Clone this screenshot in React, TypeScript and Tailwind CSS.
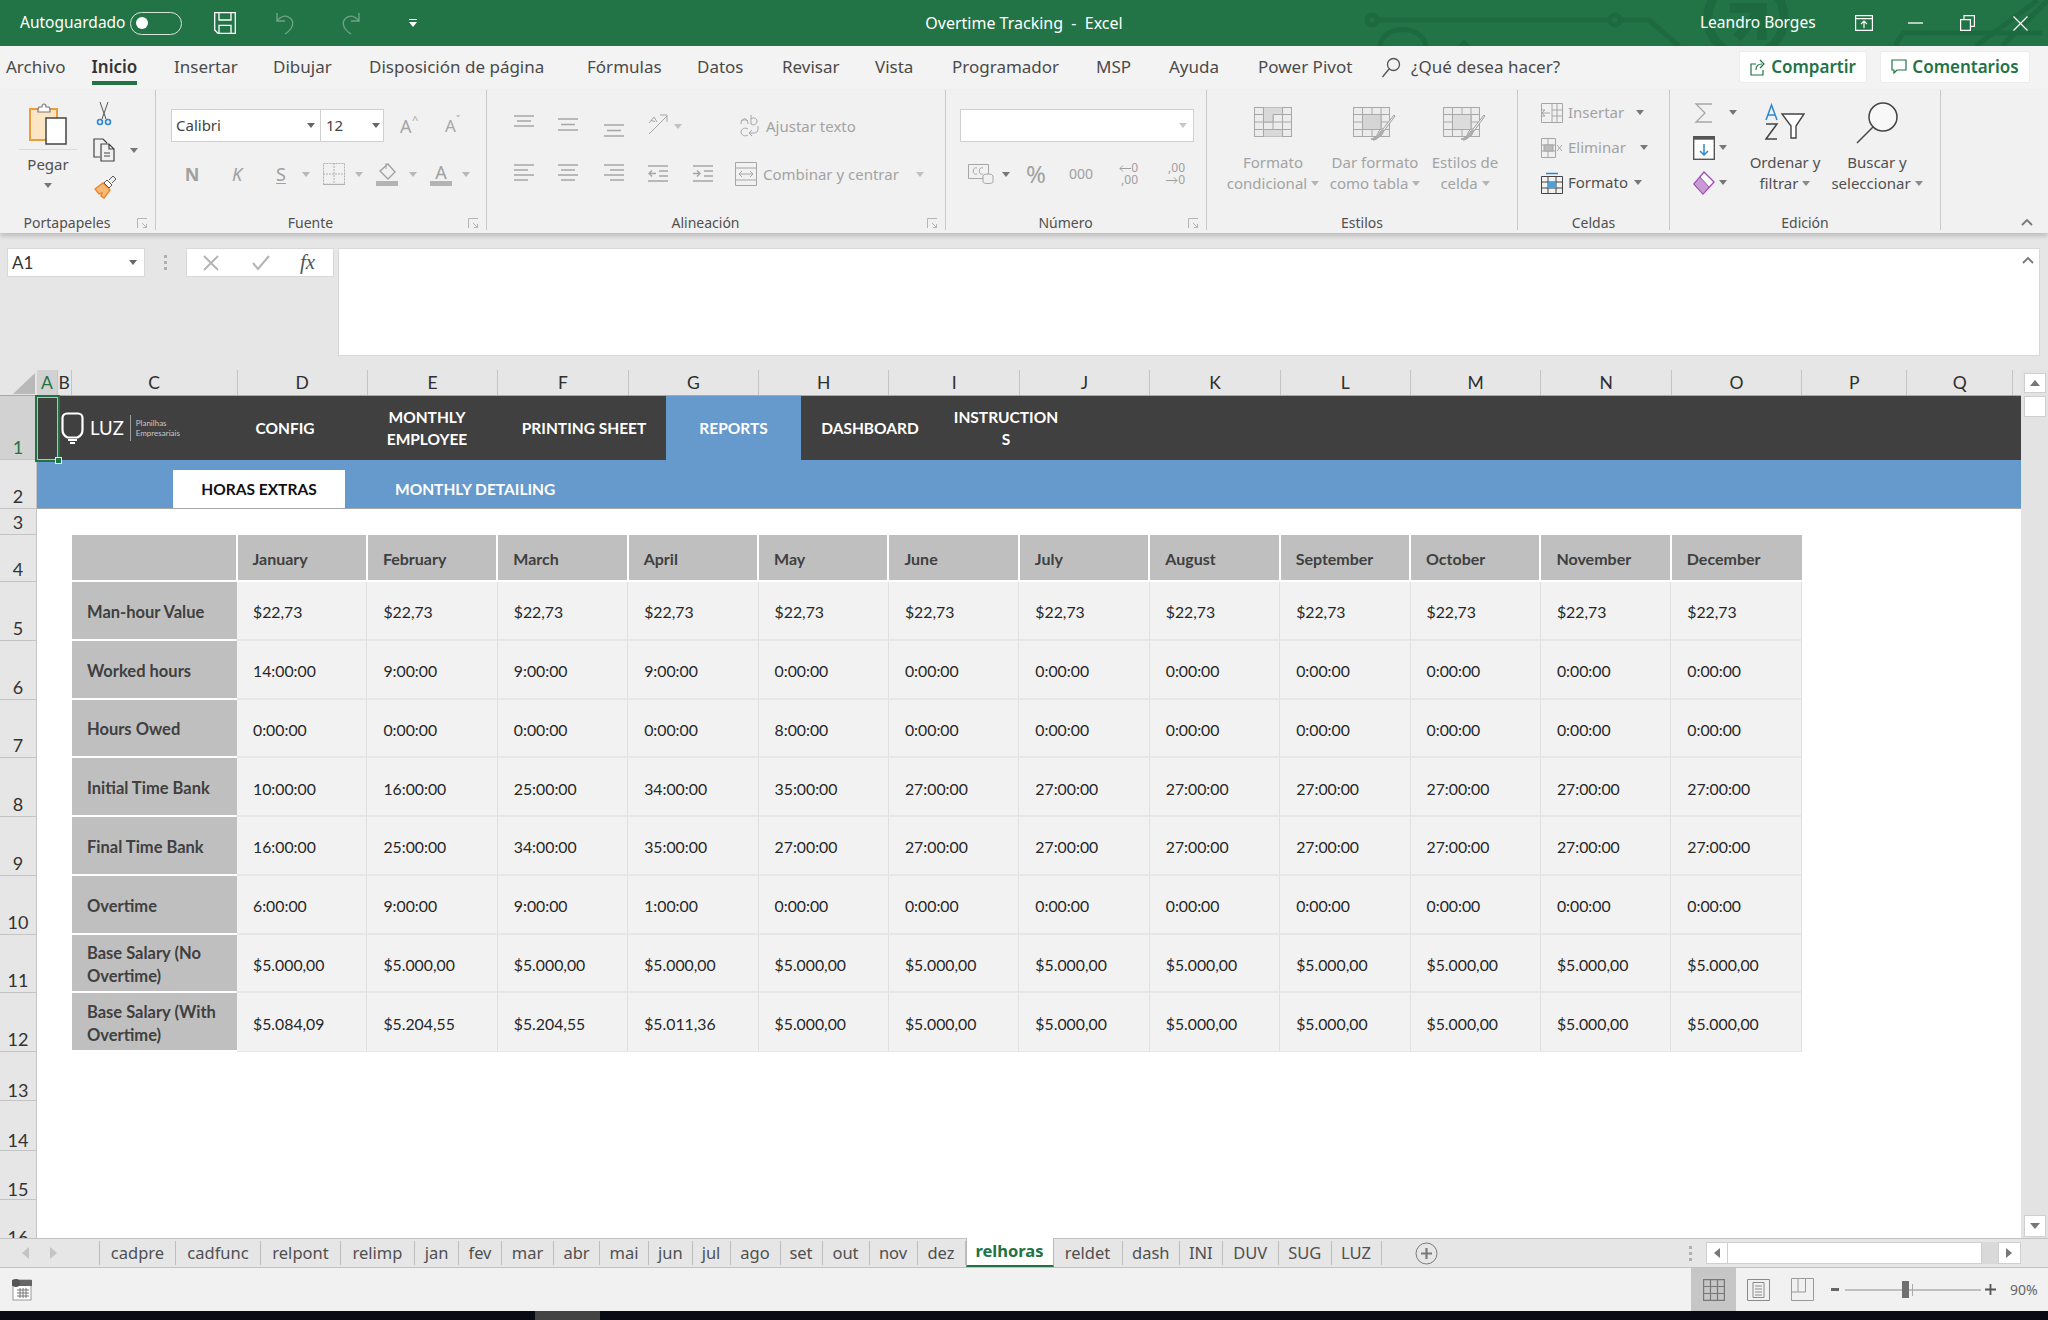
import React from "react";

const UI = "font-['Noto_Sans',sans-serif]";
const CAL = "font-[Lato,sans-serif]";

const Dd = ({ c = "#8a8a8a", className = "" }: { c?: string; className?: string }) => (
  <svg width="8" height="5" viewBox="0 0 8 5" className={`shrink-0 ${className}`}><path d="M0 0h8L4 5z" fill={c} /></svg>
);
const G = "#a6a6a6";

const Launcher = () => (
  <svg width="11" height="11" viewBox="0 0 11 11" className="absolute right-[7px] top-[3px]" fill="none" stroke="#b5b5b5">
    <path d="M.5 10V.5H10M5 5l4.5 4.5M6 9.5h3.5V6" />
  </svg>
);

const Group = ({ w, label, launcher, children }: { w: string; label: string; launcher?: boolean; children: React.ReactNode }) => (
  <div className={`${w} shrink-0 h-[140px] flex flex-col border-r border-[#c8c8c8]`}>
    <div className="h-[125px]">{children}</div>
    <div className={`h-[15px] relative flex items-center justify-center text-[14px] leading-none text-[#505050] ${launcher ? "pr-[21px]" : ""}`}>
      {label}
      {launcher && <Launcher />}
    </div>
  </div>
);

const AlignIcon = ({ kind }: { kind: string }) => {
  const L: Record<string, [number, number][]> = {
    top: [[1, 21], [4, 18], [1, 21]],
    mid: [[1, 21], [4, 18], [1, 21]],
    bot: [[1, 21], [4, 18], [1, 21]],
    left: [[1, 21], [1, 15], [1, 21], [1, 15]],
    center: [[1, 21], [4, 18], [1, 21], [4, 18]],
    right: [[1, 21], [7, 21], [1, 21], [7, 21]],
  };
  const startY = kind === "top" ? 1 : kind === "mid" ? 4 : kind === "bot" ? 10 : 2;
  const step = kind === "top" ? 5 : kind === "mid" || kind === "bot" ? 5.5 : 5;
  return (
    <svg width="22" height="22" viewBox="0 0 22 22" className="shrink-0" stroke={G} strokeWidth="1.5" fill="none">
      {L[kind].map((p, i) => <path key={i} d={`M${p[0]} ${startY + i * step}H${p[1]}`} />)}
    </svg>
  );
};

const Indent = ({ dir }: { dir: "l" | "r" }) => (
  <svg width="22" height="22" viewBox="0 0 22 22" className="shrink-0" stroke={G} strokeWidth="1.4" fill="none">
    <path d="M1 3h20M12 8h9M12 13h9M1 18h20" />
    {dir === "l" ? <path d="M9 10.5H2m3-3-3 3 3 3" /> : <path d="M1 10.5h7m-3-3 3 3-3 3" />}
  </svg>
);

const CellIcon = ({ fill = "#d9d9d9" }: { fill?: string }) => (
  <svg width="38" height="30" viewBox="0 0 38 30" fill="none" stroke="#a8a8a8">
    <rect x=".5" y=".5" width="37" height="29" fill="#ececec" />
    <path d="M9.5 0v30M19 0v30M28.5 0v30M0 7.5h38M0 15h38M0 22.5h38" />
    <path d="M9.5 0h19v7.5H19V15H9.5zM9.5 22.5h19V30h-19z" fill={fill} />
    <path d="M19 7.5h19" />
  </svg>
);

const TableBrush = ({ fill = "#d5d5d5" }: { fill?: string }) => (
  <svg width="44" height="36" viewBox="0 0 44 36" fill="none" stroke="#a8a8a8">
    <rect x=".5" y=".5" width="36" height="29" fill="#ececec" />
    <path d="M9.5 0v30M19 0v30M28 0v30M0 7.5h37M0 15h37M0 22.5h37" />
    <rect x="9.5" y="7.5" width="18.5" height="15" fill={fill} />
    <path d="M42 9 31 24c-3 1-4 3-5 5-1 3-4 4-6 4 3-1 4-5 5-7 1-3 3-4 5-4L41 8z" fill="#f1f1f1" stroke="#a0a0a0" />
    <path d="M26 27c1-3 3-4 5-4-1 3-2 6-5 7-3 2-6 3-8 2 3-1 6-2 8-5z" fill="#b0b0b0" />
  </svg>
);

const LargeBtn = ({ w, icon, l1, l2, pt, off }: { w: string; icon: React.ReactNode; l1: string; l2: string; pt?: string; off?: boolean }) => (
  <div className={`${w} shrink-0 flex flex-col items-center ${off ? "text-[#a3a3a3]" : "text-[#505050]"} text-[15px] leading-[21px]`}>
    <div className={`h-[62px] ${pt ?? "pt-[17px]"}`}>{icon}</div>
    <div>{l1}</div>
    <div className="flex items-center gap-[4px] whitespace-nowrap">{l2}<Dd c={off ? "#b5b5b5" : "#8a8a8a"} /></div>
  </div>
);

const tabs: [string, string, string?][] = [
  ["Archivo", "w-[85.5px]"],
  ["Inicio", "w-[82.5px]", "sel"],
  ["Insertar", "w-[99px]"],
  ["Dibujar", "w-[96px]"],
  ["Disposición de página", "w-[218px]"],
  ["Fórmulas", "w-[110px]"],
  ["Datos", "w-[85px]"],
  ["Revisar", "w-[93px]"],
  ["Vista", "w-[77px]"],
  ["Programador", "w-[144px]"],
  ["MSP", "w-[73px]"],
  ["Ayuda", "w-[89px]"],
  ["Power Pivot", "w-[122px]"],
];

const TitleBar = () => (
  <div className={`h-[46px] bg-[#227447] relative flex items-center text-white shrink-0 overflow-hidden ${UI}`}>
    <svg className="absolute inset-0" width="2048" height="46" viewBox="0 0 2048 46" fill="none" stroke="#1e6a40" strokeWidth="5">
      <path d="M1377 20h233M1620 20h29l30 26" />
      <circle cx="1372" cy="20" r="5" />
      <circle cx="1615" cy="20" r="5" />
      <path d="M1380 46c3-22 42-22 46 0" />
      <path d="M1458 46l6-7 6 7z" fill="#1e6a40" stroke="none" />
      <circle cx="1746" cy="18" r="38" strokeWidth="9" />
      <path d="M1730 8h32v32M1762 8l-25 30" strokeWidth="10" />
      <path d="M1895 46l8-13h140M2038 0l-62 46M2048 0l-46 46" />
    </svg>
    <div className="relative w-[700px] shrink-0 flex items-center pl-[20px]">
      <span className="w-[110px] text-[15.5px] leading-none whitespace-nowrap">Autoguardado</span>
      <div className="w-[52px] h-[23px] rounded-full border border-[#d7e6dd] flex items-center pl-[5px]">
        <div className="w-[12px] h-[12px] rounded-full bg-white" />
      </div>
      <svg width="22" height="22" viewBox="0 0 22 22" fill="none" stroke="#fff" strokeWidth="1.3" className="ml-[32px]">
        <path d="M.7.7h20.6v20.6H4l-3.3-3.3zM5 .7v7.3h12V.7M5 21.3v-8h12v8" />
      </svg>
      <svg width="22" height="24" viewBox="0 0 22 24" fill="none" stroke="#6fa386" strokeWidth="1.4" className="ml-[39px]">
        <path d="M2 2v8h8M2 10c4-5 9-6 13-3 5 4 3 11-5 16" />
      </svg>
      <svg width="22" height="24" viewBox="0 0 22 24" fill="none" stroke="#6fa386" strokeWidth="1.4" className="ml-[42px]">
        <path d="M20 2v8h-8M20 10c-4-5-9-6-13-3-5 4-3 11 5 16" />
      </svg>
      <svg width="8" height="9" viewBox="0 0 8 9" className="ml-[48px]"><path d="M0 0h8v1H0zM0 3h8L4 8z" fill="#fff" /></svg>
    </div>
    <div className="relative w-[648px] shrink-0 text-center text-[16px] leading-none whitespace-pre">Overtime Tracking  -  Excel</div>
    <div className="relative flex items-center pl-[352px]">
      <span className="w-[113px] text-[15.5px] leading-none whitespace-nowrap">Leandro Borges</span>
      <svg width="18" height="18" viewBox="0 0 18 18" fill="none" stroke="#fff" strokeWidth="1.2" className="ml-[42px]">
        <path d="M.6 1.6h16.8v14.8H.6zM.6 4.6h16.8M9 14V7M6 10l3-3 3 3" />
      </svg>
      <svg width="16" height="2" viewBox="0 0 16 2" className="ml-[35px]"><path d="M0 1h15" stroke="#fff" strokeWidth="1.3" /></svg>
      <svg width="15" height="16" viewBox="0 0 15 16" fill="none" stroke="#fff" strokeWidth="1.2" className="ml-[36px]">
        <path d="M.6 4.6h9.8v10.8H.6zM4 4.6V.6h10.4v10.8h-4" />
      </svg>
      <svg width="15" height="15" viewBox="0 0 15 15" fill="none" stroke="#fff" strokeWidth="1.2" className="ml-[38px]"><path d="M.5.5l14 14M14.500.5l-14 14" /></svg>
    </div>
  </div>
);

const TabsRow = () => (
  <div className={`h-[44px] bg-[#f3f3f3] flex items-start shrink-0 pl-[6px] ${UI} text-[#4a4a4a] text-[17px]`}>
    {tabs.map(([t, w, s]) => (
      <div key={t} className={`${w} shrink-0 h-[44px] pt-[8px] leading-[26px] whitespace-nowrap`}>
        {s ? (
          <span className="relative inline-block font-semibold text-[#333]">
            {t}
            <span className="absolute left-0 right-0 top-[27px] h-[4px] bg-[#227447]" />
          </span>
        ) : t}
      </div>
    ))}
    <svg width="20" height="22" viewBox="0 0 20 22" fill="none" stroke="#555" strokeWidth="1.3" className="ml-[1px] mt-[11px] shrink-0">
      <circle cx="12.5" cy="7.5" r="6" /><path d="M8 12 1.5 20" />
    </svg>
    <div className="ml-[10px] w-[328px] shrink-0 pt-[8px] leading-[26px] whitespace-nowrap">¿Qué desea hacer?</div>
    <div className="mt-[5px] w-[128px] h-[32px] shrink-0 bg-white rounded-[2px] border border-[#ececec] flex items-center justify-center gap-[5px] text-[#217346] font-semibold">
      <svg width="16" height="17" viewBox="0 0 16 17" fill="none" stroke="#217346" strokeWidth="1.2"><path d="M6 5H1v11h12v-5M6 11c0-4 2-6 6-6M10 1l4 4-4 4" /></svg>
      Compartir
    </div>
    <div className="ml-[13px] mt-[5px] w-[150px] h-[32px] shrink-0 bg-white rounded-[2px] border border-[#ececec] flex items-center justify-center gap-[5px] text-[#217346] font-semibold">
      <svg width="16" height="16" viewBox="0 0 16 16" fill="none" stroke="#217346" strokeWidth="1.2"><path d="M1 1h14v10H6l-3 3v-3H1z" /></svg>
      Comentarios
    </div>
  </div>
);

const DecUp = () => (
  <div className="ml-[18px] w-[26px] flex flex-col items-end text-[12px] leading-[12px]">
    <div className="flex items-center">
      <svg width="12" height="9" viewBox="0 0 12 9" fill="none" stroke="#a0a0a0"><path d="M12 4.500H1m3-3-3 3 3 3" /></svg>
      <span>0</span>
    </div>
    <span>,00</span>
  </div>
);
const DecDown = () => (
  <div className="ml-[21px] w-[26px] flex flex-col items-end text-[12px] leading-[12px]">
    <span>,00</span>
    <div className="flex items-center">
      <svg width="12" height="9" viewBox="0 0 12 9" fill="none" stroke="#a0a0a0"><path d="M0 4.500h11m-3-3 3 3-3 3" /></svg>
      <span>0</span>
    </div>
  </div>
);

const Ribbon = () => (
  <div className={`h-[143px] bg-[#f1f1f1] shrink-0 flex relative z-10 shadow-[0_3px_5px_rgba(0,0,0,0.18)] ${UI}`}>
    {/* Portapapeles */}
    <Group w="w-[156px]" label="Portapapeles" launcher>
      <div className="flex">
        <div className="w-[96px] shrink-0 flex flex-col items-center pt-[13px]">
          <svg width="38" height="42" viewBox="0 0 38 42" fill="none">
            <path d="M1 6h27v31H1z" fill="#fbe5c4" stroke="#ec9c3a" strokeWidth="2" />
            <path d="M9 6l1-2h3c0-4 4-4 4 0h3l1 2v3H9z" fill="#fff" stroke="#777" strokeWidth="1.2" />
            <path d="M17 15h20v26H17z" fill="#fff" stroke="#444" strokeWidth="1.5" />
          </svg>
          <div className="w-[58px] h-px bg-[#d9d9d9] mt-[4px]" />
          <div className="text-[15px] leading-[20px] text-[#505050] mt-[4px]">Pegar</div>
          <Dd className="mt-[9px]" c="#777" />
        </div>
        <div className="flex flex-col pt-[12px]">
          <svg width="16" height="24" viewBox="0 0 16 24" fill="none" stroke="#555">
            <path d="M4 0l6 17M12 0 6 17" /><circle cx="4" cy="20" r="2.500" stroke="#2e86d0" strokeWidth="1.6" /><circle cx="12" cy="20" r="2.500" stroke="#2e86d0" strokeWidth="1.6" />
          </svg>
          <div className="flex items-center mt-[12px]">
            <svg width="23" height="24" viewBox="0 0 23 24" fill="none" stroke="#444" strokeWidth="1.2" className="-ml-[3px]">
              <path d="M7 19H1V1h9l4 4M8 6h8l5 5v12H8zM16 6v5h5M11 15h6M11 18h6" />
            </svg>
            <Dd className="ml-[14px]" c="#777" />
          </div>
          <svg width="24" height="24" viewBox="0 0 24 24" fill="none" className="mt-[13px] -ml-[3px]">
            <path d="M2 14l8-6 7 7-6 8-3-2 1-3-3 1z" fill="#f7b977" stroke="#e9862a" strokeWidth="1.4" />
            <path d="M11 8l3-3 5 5-3 3z" fill="#fff" stroke="#555" />
            <path d="M16 5l4-4 3 3-4 4" stroke="#555" />
          </svg>
        </div>
      </div>
    </Group>

    {/* Fuente */}
    <Group w="w-[331px]" label="Fuente" launcher>
      <div className="pt-[19px] pl-[15px] flex items-center">
        <div className="w-[150px] h-[33px] bg-white border border-[#d0d0d0] flex items-center justify-between pl-[4px] pr-[5px] text-[15px] text-[#444]">Calibri<Dd c="#666" /></div>
        <div className="w-[63px] h-[33px] bg-white border border-l-0 border-[#d0d0d0] flex items-center justify-between pl-[5px] pr-[3px] text-[15px] text-[#444]">12<Dd c="#666" /></div>
        <div className="ml-[16px] w-[22px] text-[18px] leading-none text-[#a6a6a6] relative">A<span className="absolute -top-[3px] left-[12px] text-[11px]">^</span></div>
        <div className="ml-[23px] w-[22px] text-[17px] leading-none text-[#a6a6a6] relative">A<span className="absolute -top-[2px] left-[11px] text-[10px]">ˇ</span></div>
      </div>
      <div className="mt-[20px] pl-[25px] flex items-center h-[24px] text-[#a0a0a0]">
        <span className="w-[22px] text-center text-[18px] font-bold">N</span>
        <span className="ml-[23px] w-[22px] text-center text-[18px] italic">K</span>
        <span className="ml-[22px] w-[22px] text-center text-[18px] underline underline-offset-2">S</span>
        <Dd c="#b8b8b8" className="ml-[10px]" />
        <svg width="22" height="22" viewBox="0 0 22 22" fill="none" stroke="#b0b0b0" strokeDasharray="2 1" className="ml-[13px]"><path d="M.5.5h21v21H.5zM11 0v22M0 11h22" /><path d="M0 21.500h22" strokeDasharray="" strokeWidth="1.5" /></svg>
        <Dd c="#b8b8b8" className="ml-[10px]" />
        <svg width="22" height="24" viewBox="0 0 22 24" fill="none" className="ml-[13px]"><path d="M4 9l8-7 7 8-7 7z" stroke="#a0a0a0" strokeWidth="1.3" /><path d="M10 1v6" stroke="#a0a0a0" /><rect y="19" width="22" height="5" fill="#b3b3b3" /></svg>
        <Dd c="#b8b8b8" className="ml-[11px]" />
        <div className="ml-[13px] w-[22px] flex flex-col items-center text-[18px] leading-[18px]">A<div className="w-[22px] h-[5px] bg-[#b3b3b3]" /></div>
        <Dd c="#b8b8b8" className="ml-[10px]" />
      </div>
    </Group>

    {/* Alineación */}
    <Group w="w-[459px]" label="Alineación" launcher>
      <div className="pl-[26px] mt-[24px] flex items-center h-[24px]">
        <AlignIcon kind="top" />
        <div className="ml-[22px]"><AlignIcon kind="mid" /></div>
        <div className="ml-[24px]"><AlignIcon kind="bot" /></div>
        <svg width="22" height="24" viewBox="0 0 22 24" fill="none" stroke={G} className="ml-[22px] shrink-0 -mt-[4px]"><path d="M2 22 20 4M13 3h7v7" /><path d="M2 11l5-6 3 5M4 8.500l4 1" /></svg>
        <Dd c="#c0c0c0" className="ml-[5px]" />
        <svg width="20" height="24" viewBox="0 0 20 24" fill="none" stroke={G} className="ml-[58px] shrink-0"><path d="M1 10c0-7 7-7 7 0M1 7c3-2 6-1 7 0M11 1v9c3 2 6 0 6-3s-4-4-6-2M8 15c-3-2-7 0-7 3s4 5 7 3M18 12v3c0 3-2 4-4 4H9m3-3-3 3 3 3" /></svg>
        <span className="ml-[6px] text-[15px] leading-none text-[#a3a3a3] whitespace-nowrap">Ajustar texto</span>
      </div>
      <div className="pl-[26px] mt-[24px] flex items-center h-[24px]">
        <AlignIcon kind="left" />
        <div className="ml-[22px]"><AlignIcon kind="center" /></div>
        <div className="ml-[24px]"><AlignIcon kind="right" /></div>
        <div className="ml-[22px]"><Indent dir="l" /></div>
        <div className="ml-[23px]"><Indent dir="r" /></div>
        <svg width="22" height="24" viewBox="0 0 22 24" fill="none" stroke={G} className="ml-[21px] shrink-0"><path d="M.5.5h21v23H.5zM0 6h22M0 18h22M4 12h14M7 9l-3 3 3 3M15 9l3 3-3 3" /></svg>
        <span className="ml-[6px] w-[153px] shrink-0 text-[15px] leading-none text-[#a3a3a3] whitespace-nowrap">Combinar y centrar</span>
        <Dd c="#c0c0c0" />
      </div>
    </Group>

    {/* Número */}
    <Group w="w-[261px]" label="Número" launcher>
      <div className="pt-[19px] pl-[14px]">
        <div className="w-[234px] h-[33px] bg-white border border-[#d0d0d0] flex items-center justify-end pr-[6px]"><Dd c="#c8c8c8" /></div>
      </div>
      <div className="mt-[20px] pl-[22px] flex items-center h-[24px] text-[#a0a0a0]">
        <svg width="26" height="20" viewBox="0 0 26 20" fill="none" stroke={G}><path d="M.5.5h20v14H.5z" /><path d="M9 4c-5-2-5 8 0 6M15 4c-5-2-5 8 0 6" /><ellipse cx="20" cy="12" rx="5" ry="2" fill="#f1f1f1" /><path d="M15 12v6c0 2 10 2 10 0v-6" fill="#f1f1f1" /></svg>
        <Dd c="#777" className="ml-[8px]" />
        <span className="ml-[14px] w-[24px] text-center text-[24px] leading-none">%</span>
        <span className="ml-[20px] w-[26px] text-center text-[14px] leading-none">000</span>
        <DecUp />
        <DecDown />
      </div>
    </Group>

    {/* Estilos */}
    <Group w="w-[311px]" label="Estilos">
      <div className="flex pl-[15px]">
        <LargeBtn w="w-[102px]" off icon={<CellIcon />} l1="Formato" l2="condicional" />
        <LargeBtn w="w-[102px]" off icon={<TableBrush />} l1="Dar formato" l2="como tabla" />
        <LargeBtn w="w-[78px]" off icon={<TableBrush fill="#dcdcdc" />} l1="Estilos de" l2="celda" />
      </div>
    </Group>

    {/* Celdas */}
    <Group w="w-[152px]" label="Celdas">
      <div className="pt-[5px] pl-[23px] text-[15px]">
        <div className="h-[35px] flex items-center text-[#a3a3a3]">
          <svg width="22" height="20" viewBox="0 0 22 20" fill="none" stroke={G}><path d="M.5.500h21v19H.5zM11 0v20M16 0v20M11 7h11M11 13h11M0 13h4M0 7h4" /><path d="M9 10H1m3-3-3 3 3 3" /></svg>
          <span className="ml-[5px] w-[68px]">Insertar</span><Dd c="#777" />
        </div>
        <div className="h-[35px] flex items-center text-[#a3a3a3]">
          <svg width="22" height="20" viewBox="0 0 22 20" fill="none" stroke={G}><path d="M.5.500h14v19H.5zM0 7h15M0 13h15M7 0v20" /><rect x="3" y="7" width="9" height="6" fill="#bbb" /><path d="M16 7l5 6M21 7l-5 6" /></svg>
          <span className="ml-[5px] w-[72px]">Eliminar</span><Dd c="#777" />
        </div>
        <div className="h-[35px] flex items-center text-[#505050]">
          <svg width="22" height="22" viewBox="0 0 22 22" fill="none" stroke="#444"><path d="M.5 4.500h21v17H.5zM0 10h22M0 16h22M7 4v18M15 4v18" /><rect x="7" y="10" width="8" height="6" fill="#4d9fd8" stroke="none" /><path d="M5 1.500h12" stroke="#2e86d0" strokeWidth="1.5" /></svg>
          <span className="ml-[5px] w-[66px]">Formato</span><Dd c="#777" />
        </div>
      </div>
    </Group>

    {/* Edición */}
    <Group w="w-[271px]" label="Edición">
      <div className="flex">
        <div className="w-[74px] shrink-0 pt-[5px] pl-[23px]">
          <div className="h-[35px] flex items-center">
            <svg width="22" height="22" viewBox="0 0 22 22" fill="none" stroke={G} strokeWidth="1.3" className="shrink-0"><path d="M19 2H3l9 9-9 9h16" /></svg>
            <Dd c="#777" className="ml-[14px]" />
          </div>
          <div className="h-[35px] flex items-center">
            <svg width="22" height="24" viewBox="0 0 22 24" fill="none" className="shrink-0"><rect x=".7" y=".7" width="20.6" height="22.6" fill="#fff" stroke="#555" strokeWidth="1.4" /><rect x=".7" y=".7" width="20.6" height="3" fill="#555" /><path d="M11 8v11M7 15l4 4 4-4" stroke="#2e86d0" strokeWidth="1.5" /></svg>
            <Dd c="#777" className="ml-[4px]" />
          </div>
          <div className="h-[35px] flex items-center">
            <svg width="22" height="24" viewBox="0 0 22 24" className="shrink-0"><path d="M11 1l10 10-11 12L1 13z" fill="#fff" stroke="#a24fb5" strokeWidth="1.4" /><path d="M1 13l6-7 9 10-6 7z" fill="#c89ad4" stroke="#a24fb5" /></svg>
            <Dd c="#777" className="ml-[4px]" />
          </div>
        </div>
        <LargeBtn w="w-[82px]" pt="pt-[13px]" icon={
          <svg width="40" height="38" viewBox="0 0 40 38" fill="none" strokeWidth="1.5">
            <path d="M1 17 6.500 2 12 17M3 12h7" stroke="#2e86d0" />
            <path d="M1 21h11L1 36h11" stroke="#444" />
            <path d="M17 11h22l-8 12v12h-5V23z" fill="#fff" stroke="#444" strokeWidth="1.4" />
          </svg>
        } l1="Ordenar y" l2="filtrar" />
        <LargeBtn w="w-[102px]" pt="pt-[12px]" icon={
          <svg width="42" height="42" viewBox="0 0 42 42" fill="none" stroke="#444" strokeWidth="1.5">
            <circle cx="27" cy="15" r="14" fill="#f8f8f8" />
            <path d="M17 25 1 41" />
          </svg>
        } l1="Buscar y" l2="seleccionar" />
      </div>
    </Group>

    <div className="flex-1 flex items-end justify-end pr-[15px] pb-[7px]">
      <svg width="12" height="8" viewBox="0 0 12 8" fill="none" stroke="#777" strokeWidth="1.8"><path d="M1 7l5-5 5 5" /></svg>
    </div>
  </div>
);

const FormulaArea = () => (
  <div className={`h-[137px] bg-[#e6e6e6] shrink-0 flex items-start pt-[15px] pl-[7px] ${CAL}`}>
    <div className="w-[138px] h-[29px] bg-white border border-[#d8d8d8] flex items-center justify-between pl-[4px] pr-[7px] text-[17px] text-[#333]">A1<Dd c="#666" /></div>
    <div className="w-[41px] h-[29px] flex flex-col items-center justify-center gap-[3px]">
      <i className="block w-[3px] h-[3px] bg-[#b0b0b0]" /><i className="block w-[3px] h-[3px] bg-[#b0b0b0]" /><i className="block w-[3px] h-[3px] bg-[#b0b0b0]" />
    </div>
    <div className="w-[148px] h-[29px] bg-white border border-[#d8d8d8] flex items-center pl-[16px]">
      <svg width="16" height="16" viewBox="0 0 16 16" fill="none" stroke="#b3b3b3" strokeWidth="1.8"><path d="M1 1l14 14M15 1 1 15" /></svg>
      <svg width="18" height="16" viewBox="0 0 18 16" fill="none" stroke="#b3b3b3" strokeWidth="2" className="ml-[33px]"><path d="M1 8l5 6L17 1" /></svg>
      <span className="ml-[30px] font-['Liberation_Serif',serif] italic text-[21px] leading-none text-[#555]">fx</span>
    </div>
    <div className="ml-[4px] w-[1702px] h-[108px] bg-white border border-[#d8d8d8] flex justify-end pt-[7px] pr-[5px]">
      <svg width="12" height="8" viewBox="0 0 12 8" fill="none" stroke="#777" strokeWidth="1.8"><path d="M1 7l5-5 5 5" /></svg>
    </div>
  </div>
);

const cols: [string, string, boolean?][] = [
  ["A", "w-[21px]", true], ["B", "w-[13.5px]"], ["C", "w-[166px]"],
  ["D", "w-[130.4px]"], ["E", "w-[130.4px]"], ["F", "w-[130.4px]"], ["G", "w-[130.4px]"], ["H", "w-[130.4px]"], ["I", "w-[130.4px]"],
  ["J", "w-[130.4px]"], ["K", "w-[130.4px]"], ["L", "w-[130.4px]"], ["M", "w-[130.4px]"], ["N", "w-[130.4px]"], ["O", "w-[130.4px]"],
  ["P", "w-[105px]"], ["Q", "w-[106px]"],
];

const RowH = ({ n, sel, h, center, pb }: { n: number; sel?: boolean; h: string; center?: boolean; pb?: string }) => (
  <div className={`${h} w-[37px] shrink-0 border-b border-r border-[#c4c4c4] flex justify-center text-[18px] leading-none ${center ? "items-center" : `items-end ${pb ?? "pb-[3px]"}`} ${sel ? "bg-[#d2d2d2] text-[#217346]" : "bg-[#e6e6e6] text-[#333]"}`}>{n}</div>
);

const months = ["January", "February", "March", "April", "May", "June", "July", "August", "September", "October", "November", "December"];
const rep = (v: string, n = 12) => Array(n).fill(v) as string[];
const rows: [string, string[]][] = [
  ["Man-hour Value", rep("$22,73")],
  ["Worked hours", ["14:00:00", "9:00:00", "9:00:00", "9:00:00", ...rep("0:00:00", 8)]],
  ["Hours Owed", ["0:00:00", "0:00:00", "0:00:00", "0:00:00", "8:00:00", ...rep("0:00:00", 7)]],
  ["Initial Time Bank", ["10:00:00", "16:00:00", "25:00:00", "34:00:00", "35:00:00", ...rep("27:00:00", 7)]],
  ["Final Time Bank", ["16:00:00", "25:00:00", "34:00:00", "35:00:00", ...rep("27:00:00", 8)]],
  ["Overtime", ["6:00:00", "9:00:00", "9:00:00", "1:00:00", ...rep("0:00:00", 8)]],
  ["Base Salary (No Overtime)", rep("$5.000,00")],
  ["Base Salary (With Overtime)", ["$5.084,09", "$5.204,55", "$5.204,55", "$5.011,36", ...rep("$5.000,00", 8)]],
];

const Sheet = () => (
  <div className={`flex-1 min-h-0 flex ${CAL}`}>
    <div className="w-[2021px] shrink-0 flex flex-col overflow-hidden">
      {/* column headers */}
      <div className="h-[26px] flex shrink-0 bg-[#e6e6e6] border-b border-[#a8a8a8]">
        <div className="w-[37px] shrink-0 flex items-end justify-end pr-[2px] pb-[1px]">
          <svg width="22" height="21" viewBox="0 0 22 21"><path d="M22 0v21H0z" fill="#b9b9b9" /></svg>
        </div>
        {cols.map(([c, w, sel]) => (
          <div key={c} className={`${w} shrink-0 flex items-center justify-center border-r border-[#c4c4c4] text-[17.5px] leading-none ${sel ? "bg-[#d2d2d2] text-[#217346]" : "text-[#2e2e2e]"}`}>{c}</div>
        ))}
      </div>

      {/* row 1 */}
      <div className="flex shrink-0">
        <RowH n={1} sel h="h-[64px]" />
        <div className="flex-1 h-[64px] bg-[#404040] flex items-stretch text-white font-bold text-[15.5px] leading-[22px] text-center relative">
          <div className="absolute -left-[2px] -top-[1px] w-[25px] h-[67px] border-2 border-[#217346] z-10">
            <div className="w-full h-full border border-[#bdbdbd]" />
            <div className="absolute -right-[4px] -bottom-[4px] w-[7px] h-[7px] bg-[#217346] border border-[#e8e8e8]" />
          </div>
          <div className="w-[181px] shrink-0 flex items-center pl-[24px] font-normal">
            <svg width="23" height="33" viewBox="0 0 23 33" fill="none" stroke="#fff" strokeWidth="2.2">
              <path d="M6 1.500h11a4.500 4.500 0 0 1 4.500 4.500v12c0 5-4 7-5 7.500H6.500c-1-.5-5-2.500-5-7.500V6A4.500 4.500 0 0 1 6 1.500z" />
              <path d="M7 28h9M9 31h5" />
            </svg>
            <span className="ml-[6px] text-[18.5px] leading-none">LUZ</span>
            <span className="ml-[6px] w-px h-[26px] bg-[#9a9a9a]" />
            <span className="ml-[5px] text-[8px] leading-[10px] text-[#c8c8c8] text-left whitespace-nowrap">Planilhas<br />Empresariais</span>
          </div>
          <div className="w-[134px] shrink-0 flex items-center justify-center">CONFIG</div>
          <div className="w-[150px] shrink-0 flex items-center justify-center">MONTHLY<br />EMPLOYEE</div>
          <div className="w-[164px] shrink-0 flex items-center justify-center">PRINTING SHEET</div>
          <div className="w-[135px] shrink-0 flex items-center justify-center bg-[#6699cc]">REPORTS</div>
          <div className="w-[138px] shrink-0 flex items-center justify-center">DASHBOARD</div>
          <div className="w-[134px] shrink-0 flex items-center justify-center">INSTRUCTION<br />S</div>
        </div>
      </div>

      {/* row 2 */}
      <div className="flex shrink-0">
        <RowH n={2} h="h-[49px]" />
        <div className="flex-1 h-[49px] bg-[#6699cc] border-b border-[#a8a8a8] pl-[136px] flex items-end font-bold text-[15.5px] leading-none">
          <div className="w-[172px] h-[38px] bg-white text-[#111] flex items-center justify-center pt-[2px]">HORAS EXTRAS</div>
          <div className="ml-[50px] h-[38px] text-white flex items-center pt-[2px]">MONTHLY DETAILING</div>
        </div>
      </div>

      {/* row 3 */}
      <div className="flex shrink-0">
        <RowH n={3} h="h-[26px]" center />
        <div className="flex-1 bg-white" />
      </div>

      {/* row 4 */}
      <div className="flex shrink-0">
        <RowH n={4} h="h-[47px]" />
        <div className="flex-1 pl-[35px] flex bg-white">
          <div className="w-[165.5px] shrink-0 bg-[#bfbfbf] border-r-2 border-b-2 border-white" />
          {months.map((m) => (
            <div key={m} className="w-[130.4px] shrink-0 bg-[#bfbfbf] border-r-2 last:border-r-0 border-b-2 border-white flex items-center pl-[15px] pt-[2px] font-bold text-[16px] leading-none text-[#404040]">{m}</div>
          ))}
        </div>
      </div>

      {/* rows 5-12 */}
      {rows.map(([label, vals], i) => (
        <div key={label} className="flex shrink-0">
          <RowH n={i + 5} h="h-[58.75px]" />
          <div className="flex-1 pl-[35px] flex bg-white">
            <div className="w-[165px] shrink-0 bg-[#bfbfbf] border-b-2 border-white flex items-center pl-[15px] pr-[8px] pt-[4px] font-bold text-[16.5px] leading-[23px] text-[#404040]">{label}</div>
            {vals.map((v, j) => (
              <div key={j} className={`w-[130.4px] shrink-0 bg-[#f2f2f2] border-r border-[#e0e0e0] flex items-center pl-[16px] pt-[4px] text-[15.8px] leading-none text-[#262626] ${i < 7 ? "border-b-2 border-b-[#e6e6e6]" : "border-b border-b-[#e6e6e6]"}`}>{v}</div>
            ))}
          </div>
        </div>
      ))}

      {/* rows 13-16 */}
      {[13, 14, 15].map((n) => (
        <div key={n} className="flex shrink-0">
          <RowH n={n} h="h-[49.3px]" pb="pb-[1px]" />
          <div className="flex-1 bg-white" />
        </div>
      ))}
      <div className="flex flex-1 min-h-0">
        <div className="w-[37px] shrink-0 bg-[#e6e6e6] border-r border-[#c4c4c4] flex justify-center items-start pt-[28px] h-[60px] text-[18px] leading-none text-[#333]">16</div>
        <div className="flex-1 bg-white" />
      </div>
    </div>

    {/* vertical scrollbar */}
    <div className="flex-1 bg-[#e3e3e3] flex flex-col items-center pt-[3px] pb-[1px]">
      <div className="w-[22px] h-[20px] bg-white border border-[#cfcfcf] flex items-center justify-center"><svg width="10" height="6" viewBox="0 0 10 6"><path d="M5 0l5 6H0z" fill="#777" /></svg></div>
      <div className="w-[22px] h-[21px] bg-white border border-[#cfcfcf] mt-[3px]" />
      <div className="flex-1" />
      <div className="w-[22px] h-[22px] bg-white border border-[#cfcfcf] flex items-center justify-center"><svg width="10" height="6" viewBox="0 0 10 6"><path d="M0 0h10L5 6z" fill="#777" /></svg></div>
    </div>
  </div>
);

const sheets: [string, string][] = [
  ["cadpre", "w-[76px]"], ["cadfunc", "w-[85px]"], ["relpont", "w-[80px]"], ["relimp", "w-[74px]"], ["jan", "w-[44px]"], ["fev", "w-[43px]"],
  ["mar", "w-[52px]"], ["abr", "w-[46px]"], ["mai", "w-[49px]"], ["jun", "w-[43.5px]"], ["jul", "w-[38px]"], ["ago", "w-[50px]"], ["set", "w-[42px]"],
  ["out", "w-[47px]"], ["nov", "w-[48px]"], ["dez", "w-[48px]"], ["relhoras", "w-[88px]"], ["reldet", "w-[69px]"], ["dash", "w-[57.5px]"],
  ["INI", "w-[42.5px]"], ["DUV", "w-[56.5px]"], ["SUG", "w-[52.5px]"], ["LUZ", "w-[50px]"],
];

const SheetTabs = () => (
  <div className={`h-[30px] shrink-0 bg-[#e6e6e6] border-t border-b border-[#c2c2c2] flex items-stretch ${UI} text-[16.5px] text-[#505050]`}>
    <div className="w-[100px] shrink-0 flex items-center pl-[22px] gap-[21px] border-r border-[#bdbdbd] my-[2px]">
      <svg width="7" height="12" viewBox="0 0 7 12"><path d="M7 0v12L0 6z" fill="#c4c4c4" /></svg>
      <svg width="7" height="12" viewBox="0 0 7 12"><path d="M0 0v12l7-6z" fill="#c4c4c4" /></svg>
    </div>
    {sheets.map(([s, w]) =>
      s === "relhoras" ? (
        <div key={s} className={`${w} shrink-0 -mt-px bg-white border-x border-[#b8b8b8] border-b-2 border-b-[#217346] flex items-center justify-center text-[#217346] font-bold leading-none`}>{s}</div>
      ) : (
        <div key={s} className={`${w} shrink-0 my-[2px] border-r border-[#bdbdbd] flex items-center justify-center leading-none whitespace-nowrap`}>{s}</div>
      )
    )}
    <div className="ml-[33px] flex items-center">
      <svg width="23" height="23" viewBox="0 0 23 23" fill="none" stroke="#7a7a7a"><circle cx="11.5" cy="11.5" r="10.5" /><path d="M11.500 6v11M6 11.500h11" strokeWidth="2.2" /></svg>
    </div>
    <div className="ml-[251px] flex flex-col justify-center gap-[3px]">
      <i className="block w-[3px] h-[3px] bg-[#b0b0b0]" /><i className="block w-[3px] h-[3px] bg-[#b0b0b0]" /><i className="block w-[3px] h-[3px] bg-[#b0b0b0]" />
    </div>
    <div className="ml-[14px] my-[3px] flex w-[315px] bg-[#d9d9d9]">
      <div className="w-[22px] bg-white border border-[#cfcfcf] flex items-center justify-center"><svg width="6" height="10" viewBox="0 0 6 10"><path d="M6 0v10L0 5z" fill="#777" /></svg></div>
      <div className="w-[254px] bg-white border-y border-r border-[#cfcfcf]" />
      <div className="flex-1" />
      <div className="w-[23px] bg-white border border-[#cfcfcf] flex items-center justify-center"><svg width="6" height="10" viewBox="0 0 6 10"><path d="M0 0v10l6-5z" fill="#777" /></svg></div>
    </div>
  </div>
);

const StatusBar = () => (
  <div className={`h-[43px] shrink-0 bg-[#f1f1f1] flex items-stretch pl-[12px] ${UI}`}>
    <svg width="20" height="22" viewBox="0 0 20 22" className="self-center" fill="none">
      <rect x="1" y="1" width="18" height="20" fill="#fff" stroke="#999" />
      <rect x="0" y="1" width="20" height="6" fill="#666" />
      <circle cx="4" cy="4" r="4" fill="#555" />
      <path d="M5 11h12M5 14h12M5 17h12M8 9v10M11 9v10M14 9v10" stroke="#777" />
    </svg>
    <div className="ml-[1659px] w-[45px] bg-[#c6c6c6] flex items-center justify-center">
      <svg width="22" height="22" viewBox="0 0 22 22" fill="none" stroke="#777" strokeWidth="1.2"><path d="M.6.600h20.800v20.800H.6zM7.500 0v22M14.500 0v22M0 7.500h22M0 14.500h22" /></svg>
    </div>
    <div className="ml-[11px] flex items-center">
      <svg width="23" height="22" viewBox="0 0 23 22" fill="none" stroke="#8a8a8a"><path d="M.5.500h22v21H.5zM6 3.500h11v15H6zM8 7h7M8 10h7M8 13h7M8 16h7" /></svg>
    </div>
    <div className="ml-[21px] flex items-center">
      <svg width="23" height="23" viewBox="0 0 23 23" fill="none" stroke="#9a9a9a"><path d="M.5.500h22v22H.5zM.5 14h14V.5M7 .5V14" /></svg>
    </div>
    <div className="ml-[17px] flex items-center">
      <i className="block w-[8px] h-[2.5px] bg-[#666]" />
      <div className="ml-[6px] relative w-[136px] h-[2px] bg-[#bfbfbf]">
        <i className="absolute left-[67px] -top-[5px] w-px h-[12px] bg-[#aaa]" />
        <i className="absolute left-[57px] -top-[8px] w-[7px] h-[17px] bg-[#707070]" />
      </div>
      <svg width="11" height="11" viewBox="0 0 11 11" className="ml-[4px]" fill="none" stroke="#555" strokeWidth="1.8"><path d="M5.500 0v11M0 5.500h11" /></svg>
      <span className="ml-[14px] text-[14px] leading-none text-[#666]">90%</span>
    </div>
  </div>
);

export default function App() {
  return (
    <div className="w-[2048px] h-[1320px] flex flex-col overflow-hidden bg-white">
      <TitleBar />
      <TabsRow />
      <Ribbon />
      <FormulaArea />
      <Sheet />
      <SheetTabs />
      <StatusBar />
      <div className="h-[9px] shrink-0 bg-[#0a0a14] pl-[535px]"><div className="w-[65px] h-[9px] bg-[#444]" /></div>
    </div>
  );
}
